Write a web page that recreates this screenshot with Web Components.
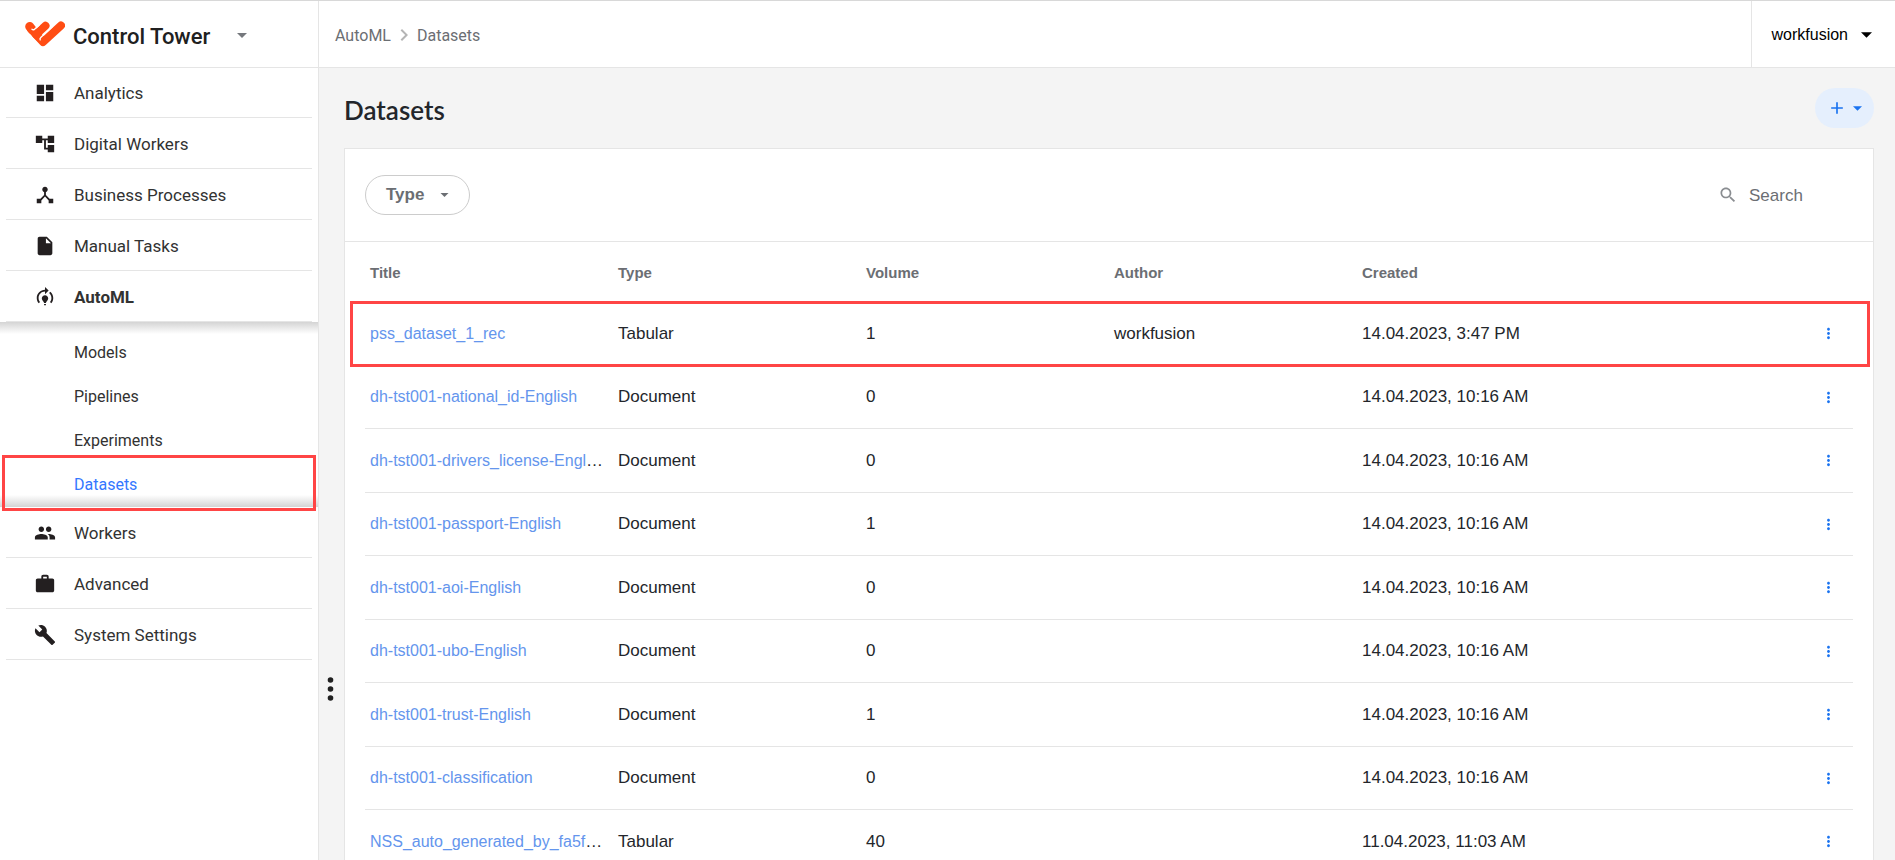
<!DOCTYPE html>
<html lang="en">
<head>
<meta charset="utf-8">
<meta name="viewport" content="width=device-width, initial-scale=1">
<title>Control Tower - Datasets</title>
<style>
  body {
    margin: 0;
    font-family: "Liberation Sans", Arial, sans-serif;
    color: #23262b;
    --line: #e5e5e5;
    --muted: #6b6e73;
    --accent: #1a73f0;
    --mark: #ff4545;
  }
</style>
</head>
<body>

<app-shell>
  <side-bar slot="side">
    <nav-item icon="dashboard" first>Analytics</nav-item>
    <nav-item icon="tree">Digital Workers</nav-item>
    <nav-item icon="hub">Business Processes</nav-item>
    <nav-item icon="file">Manual Tasks</nav-item>
    <nav-item icon="training" active>AutoML</nav-item>
    <sub-menu>
      <sub-item>Models</sub-item>
      <sub-item>Pipelines</sub-item>
      <sub-item>Experiments</sub-item>
      <sub-item active>Datasets</sub-item>
    </sub-menu>
    <nav-item icon="people">Workers</nav-item>
    <nav-item icon="work">Advanced</nav-item>
    <nav-item icon="build">System Settings</nav-item>
  </side-bar>
  <top-bar slot="top" user="workfusion"></top-bar>
  <page-head>Datasets</page-head>
  <data-card>
    <table-tools slot="tools"></table-tools>
    <dataset-table></dataset-table>
  </data-card>
</app-shell>

<script>
const icons = {
  dashboard: 'M3 13h8V3H3v10zm0 8h8v-6H3v6zm10 0h8V11h-8v10zm0-18v6h8V3h-8z',
  tree: 'M22 11V3h-7v3H9V3H2v8h7V8h2v10h4v3h7v-8h-7v3h-2V8h2v3z',
  hub: 'M17 16l-4-4V8.82C14.16 8.4 15 7.3 15 6c0-1.66-1.34-3-3-3S9 4.34 9 6c0 1.3.84 2.4 2 2.82V12l-4 4H3v5h5v-3.05l4-4.2 4 4.2V21h5v-5h-4z',
  file: 'M6 2c-1.1 0-1.99.9-1.99 2L4 20c0 1.1.89 2 1.99 2H18c1.1 0 2-.9 2-2V8l-6-6H6zm7 7V3.5L18.5 9H13z',
  training: 'M15.5 13.5c0 2-2.5 3.5-2.5 5h-2c0-1.5-2.5-3-2.5-5 0-1.93 1.57-3.5 3.5-3.5s3.5 1.57 3.5 3.5zm-2.5 6h-2V21h2v-1.5zm6-6.5c0 1.68-.59 3.21-1.58 4.42l1.42 1.42C20.18 17.27 21 15.23 21 13c0-2.74-1.23-5.19-3.16-6.84l-1.42 1.42C17.99 8.86 19 10.82 19 13zm-3-8l-4-4v3c-4.97 0-9 4.03-9 9 0 2.23.82 4.27 2.16 5.84l1.42-1.42C5.59 16.21 5 14.68 5 13c0-3.86 3.14-7 7-7v3l4-4z',
  people: 'M16 11c1.66 0 2.99-1.34 2.99-3S17.66 5 16 5c-1.66 0-3 1.34-3 3s1.34 3 3 3zm-8 0c1.66 0 2.99-1.34 2.99-3S9.66 5 8 5C6.34 5 5 6.34 5 8s1.34 3 3 3zm0 2c-2.33 0-7 1.17-7 3.5V19h14v-2.5c0-2.33-4.67-3.5-7-3.5zm8 0c-.29 0-.62.02-.97.05 1.16.84 1.97 1.97 1.97 3.45V19h6v-2.5c0-2.33-4.67-3.5-7-3.5z',
  work: 'M20 6h-4V4c0-1.11-.89-2-2-2h-4c-1.11 0-2 .89-2 2v2H4c-1.11 0-1.99.89-1.99 2L2 19c0 1.11.89 2 2 2h16c1.11 0 2-.89 2-2V8c0-1.11-.89-2-2-2zm-6 0h-4V4h4v2z',
  build: 'M22.7 19l-9.1-9.1c.9-2.3.4-5-1.5-6.9-2-2-5-2.4-7.4-1.3L9 6 6 9 1.6 4.7C.4 7.1.9 10.1 2.9 12.1c1.9 1.9 4.6 2.4 6.9 1.5l9.1 9.1c.4.4 1 .4 1.4 0l2.3-2.3c.5-.4.5-1.1.1-1.4z',
  search: 'M15.5 14h-.79l-.28-.27C15.41 12.59 16 11.11 16 9.5 16 5.91 13.09 3 9.5 3S3 5.91 3 9.5 5.91 16 9.5 16c1.61 0 3.09-.59 4.23-1.57l.27.28v.79l5 4.99L20.49 19l-4.99-5zm-6 0C7.01 14 5 11.99 5 9.5S7.01 5 9.5 5 14 7.01 14 9.5 11.99 14 9.5 14z',
  chevron: 'M10 6L8.59 7.41 13.17 12l-4.58 4.59L10 18l6-6z',
  plus: 'M19 13h-6v6h-2v-6H5v-2h6V5h2v6h6v2z',
  more: 'M12 8c1.1 0 2-.9 2-2s-.9-2-2-2-2 .9-2 2 .9 2 2 2zm0 2c-1.1 0-2 .9-2 2s.9 2 2 2 2-.9 2-2-.9-2-2-2zm0 6c-1.1 0-2 .9-2 2s.9 2 2 2 2-.9 2-2-.9-2-2-2z',
};

const icon = (name, size) =>
  `<svg width="${size}" height="${size}" viewBox="0 0 24 24" fill="currentColor" aria-hidden="true"><path d="${icons[name]}"/></svg>`;

const caret = (width, height) =>
  `<svg width="${width}" height="${height}" viewBox="0 0 10 5" fill="currentColor" aria-hidden="true"><path d="M0 0h10L5 5z"/></svg>`;

const reset = `
  * { box-sizing: border-box; }
  svg { display: block; flex: none; }
  button, input { font: inherit; color: inherit; }
  button { border: 0; background: none; padding: 0; cursor: pointer; }
  a { color: inherit; text-decoration: none; }
`;

class Base extends HTMLElement {
  connectedCallback() {
    if (this.shadowRoot) return;
    this.attachShadow({ mode: 'open' });
    const template = document.createElement('template');
    template.innerHTML = `<style>${reset}${this.css()}</style>${this.html()}`;
    this.shadowRoot.appendChild(template.content.cloneNode(true));
  }
}

class AppShell extends Base {
  css() {
    return `
      :host {
        display: grid;
        grid-template: auto 1fr / 319px 1fr;
        height: 100vh;
        overflow: hidden;
        border-top: 1px solid #d8d8d8;
        box-sizing: border-box;
        background: #f4f4f4;
      }
      ::slotted([slot="side"]) { grid-row: 1 / 3; }
      main {
        position: relative;
        min-height: 0;
        overflow: hidden;
        padding: 0 21px 0 25px;
      }
      /* drag handle of the side bar */
      .handle {
        position: absolute;
        left: 0;
        bottom: 20%;
        color: #202020;
      }
    `;
  }
  html() {
    return `
      <slot name="side"></slot>
      <slot name="top"></slot>
      <main>
        <button class="handle" aria-label="Resize side bar">
          <svg width="23" height="26" viewBox="0 0 23 26" fill="currentColor" aria-hidden="true">
            <circle cx="11.500" cy="4" r="2.800"/><circle cx="11.500" cy="13" r="2.800"/><circle cx="11.500" cy="22" r="2.800"/>
          </svg>
        </button>
        <slot></slot>
      </main>`;
  }
}

class SideBar extends Base {
  css() {
    return `
      :host {
        display: block;
        background: #fff;
        border-right: 1px solid var(--line);
        font-family: Roboto, sans-serif;
      }
      header {
        display: flex;
        align-items: center;
        height: 67px;
        padding: 0 25px;
        border-bottom: 1px solid var(--line);
      }
      .name {
        margin: 4px 27px 0 8px;
        font-size: 22px;
        font-weight: 500;
        color: #202020;
      }
      header button { color: #75787d; padding-top: 3px; }
    `;
  }
  html() {
    return `
      <header>
        <svg width="40" height="26" viewBox="0 0 40 26" fill="none" stroke="#ff4d14" stroke-linecap="round" stroke-linejoin="round" aria-hidden="true">
          <path stroke-width="9" d="M4.700 5.500L7 8.500"/>
          <path stroke-width="8" d="M6 8L18 21L36 4.500"/>
          <path stroke-width="8" d="M20.500 4.800L11 13.500L16 18"/>
          <path stroke="#fff" stroke-width="1.400" d="M14 4.200L9.500 8.300Q8 9.200 7 8.300"/>
          <path stroke="#fff" stroke-width="1.400" d="M27.500 5.500L16 16.200Q14.500 17.600 15.200 18.800"/>
        </svg>
        <span class="name">Control Tower</span>
        <button aria-label="Switch application">${caret(10, 5)}</button>
      </header>
      <nav><slot></slot></nav>`;
  }
}

class NavItem extends Base {
  css() {
    return `
      :host {
        display: block;
        margin: 0 6px;
        border-bottom: 1px solid var(--line);
        color: #323232;
      }
      a {
        display: flex;
        align-items: center;
        gap: 18px;
        height: 50px;
        padding: 2px 0 0 28px;
        font-size: 17px;
      }
      :host([first]) a { height: 49px; padding-top: 0; }
      :host([active]) a { font-weight: 700; }
      svg { color: #231f20; }
    `;
  }
  html() {
    return `<a href="#">${icon(this.getAttribute('icon'), 22)}<slot></slot></a>`;
  }
}

class SubMenu extends Base {
  css() {
    return `
      :host {
        display: block;
        padding-top: 9px;
        background:
          linear-gradient(#d4d4d4, #fff0) top / 100% 12px no-repeat,
          linear-gradient(#fff0, #d4d4d4) bottom / 100% 12px no-repeat;
      }
    `;
  }
  html() {
    return `<slot></slot>`;
  }
}

class SubItem extends Base {
  css() {
    return `
      :host { display: block; position: relative; color: #323232; }
      a { display: block; padding-left: 74px; font-size: 16px; line-height: 44px; }
      :host([active]) { color: #3377ff; }
      :host([active])::after {
        content: "";
        position: absolute;
        inset: -8px 2px -4px;
        border: 3px solid var(--mark);
        pointer-events: none;
      }
    `;
  }
  html() {
    return `<a href="#"><slot></slot></a>`;
  }
}

class TopBar extends Base {
  css() {
    return `
      :host {
        display: flex;
        justify-content: space-between;
        height: 67px;
        box-sizing: border-box;
        background: #fff;
        border-bottom: 1px solid var(--line);
      }
      nav {
        display: flex;
        align-items: center;
        gap: 1px;
        padding: 2px 0 0 16px;
        font: 16px Roboto, sans-serif;
        color: var(--muted);
      }
      nav svg { color: #b5b5b5; }
      button {
        display: flex;
        align-items: center;
        gap: 13px;
        padding: 2px 23px 0 20px;
        border-left: 1px solid var(--line);
        font-size: 16px;
        color: #000;
      }
    `;
  }
  html() {
    return `
      <nav aria-label="Breadcrumb">
        <a href="#">AutoML</a>${icon('chevron', 24)}<a href="#">Datasets</a>
      </nav>
      <button>${this.getAttribute('user')}${caret(11, 6)}</button>`;
  }
}

class PageHead extends Base {
  css() {
    return `
      :host {
        display: flex;
        align-items: center;
        justify-content: space-between;
        padding: 20px 0;
      }
      h1 {
        margin: 4px 0 0;
        font: 600 26px/36px Lato, sans-serif;
      }
      button {
        display: flex;
        align-items: center;
        justify-content: center;
        gap: 6px;
        width: 59px;
        height: 40px;
        border-radius: 20px;
        background: #e5effd;
        color: var(--accent);
      }
    `;
  }
  html() {
    return `
      <h1><slot></slot></h1>
      <button aria-label="Add dataset">${icon('plus', 20)}${caret(9, 5)}</button>`;
  }
}

class DataCard extends Base {
  css() {
    return `
      :host {
        display: block;
        background: #fff;
        border: 1px solid var(--line);
      }
      .body { padding: 0 20px; }
    `;
  }
  html() {
    return `<slot name="tools"></slot><div class="body"><slot></slot></div>`;
  }
}

class TableTools extends Base {
  css() {
    return `
      :host {
        display: flex;
        align-items: center;
        justify-content: space-between;
        padding: 26px 20px;
        border-bottom: 1px solid var(--line);
        font-size: 17px;
        color: var(--muted);
      }
      button {
        display: flex;
        align-items: center;
        gap: 16px;
        height: 40px;
        padding: 0 20px;
        border: 1px solid #ccc;
        border-radius: 20px;
        font-weight: 700;
      }
      label { display: flex; align-items: center; gap: 11px; }
      label svg { color: #8a8d91; }
      input {
        width: 104px;
        padding: 2px 0 0;
        border: 0;
        outline: 0;
        background: none;
      }
      input::placeholder { color: var(--muted); opacity: 1; }
    `;
  }
  html() {
    return `
      <button>Type ${caret(9, 4)}</button>
      <label>${icon('search', 20)}<input type="text" placeholder="Search" aria-label="Search"></label>`;
  }
}

// long titles come already shortened, with the last field set
const rows = [
  ['pss_dataset_1_rec', 'Tabular', 1, 'workfusion', '14.04.2023, 3:47 PM'],
  ['dh-tst001-national_id-English', 'Document', 0, '', '14.04.2023, 10:16 AM'],
  ['dh-tst001-drivers_license-Engl', 'Document', 0, '', '14.04.2023, 10:16 AM', true],
  ['dh-tst001-passport-English', 'Document', 1, '', '14.04.2023, 10:16 AM'],
  ['dh-tst001-aoi-English', 'Document', 0, '', '14.04.2023, 10:16 AM'],
  ['dh-tst001-ubo-English', 'Document', 0, '', '14.04.2023, 10:16 AM'],
  ['dh-tst001-trust-English', 'Document', 1, '', '14.04.2023, 10:16 AM'],
  ['dh-tst001-classification', 'Document', 0, '', '14.04.2023, 10:16 AM'],
  ['NSS_auto_generated_by_fa5f', 'Tabular', 40, '', '11.04.2023, 11:03 AM', true],
];

class DatasetTable extends Base {
  css() {
    return `
      :host { display: block; }
      table {
        width: 100%;
        table-layout: fixed;
        border-collapse: separate;
        border-spacing: 0;
      }
      th, td { padding: 0 5px; text-align: left; }
      th {
        height: 60px;
        font-size: 15px;
        color: var(--muted);
      }
      td {
        height: 64px;
        border-bottom: 1px solid var(--line);
        font-size: 17px;
        white-space: nowrap;
      }
      tr:nth-child(even) td { height: 63px; }
      td a { font-size: 16px; color: #6495ed; }
      td button { display: block; margin: 0 11px 0 auto; color: var(--accent); }
      .marked { position: relative; }
      .marked td:first-child::after {
        content: "";
        position: absolute;
        inset: -1px -17px -1px -15px;
        border: 3px solid var(--mark);
        pointer-events: none;
      }
    `;
  }
  html() {
    const body = rows.map(([title, type, volume, author, created, cut], i) => `
      <tr${i === 0 ? ' class="marked"' : ''}>
        <td><a href="#">${title}</a>${cut ? '…' : ''}</td>
        <td>${type}</td>
        <td>${volume}</td>
        <td>${author}</td>
        <td>${created}</td>
        <td><button aria-label="Actions for ${title}">${icon('more', 17)}</button></td>
      </tr>`).join('');
    return `
      <table>
        <thead>
          <tr><th>Title</th><th>Type</th><th>Volume</th><th>Author</th><th>Created</th><th></th></tr>
        </thead>
        <tbody>${body}</tbody>
      </table>`;
  }
}

customElements.define('app-shell', AppShell);
customElements.define('side-bar', SideBar);
customElements.define('nav-item', NavItem);
customElements.define('sub-menu', SubMenu);
customElements.define('sub-item', SubItem);
customElements.define('top-bar', TopBar);
customElements.define('page-head', PageHead);
customElements.define('data-card', DataCard);
customElements.define('table-tools', TableTools);
customElements.define('dataset-table', DatasetTable);
</script>
</body>
</html>
